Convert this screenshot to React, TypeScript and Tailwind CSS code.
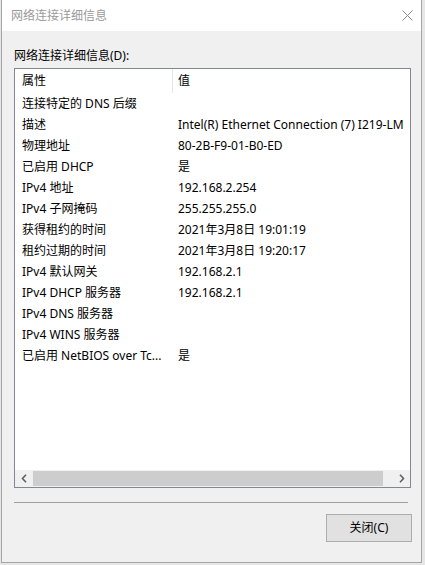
const rows: [string, string][] = [
  ['连接特定的 DNS 后缀', ''],
  ['描述', 'Intel(R) Ethernet Connection (7) I219-LM'],
  ['物理地址', '80-2B-F9-01-B0-ED'],
  ['已启用 DHCP', '是'],
  ['IPv4 地址', '192.168.2.254'],
  ['IPv4 子网掩码', '255.255.255.0'],
  ['获得租约的时间', '2021年3月8日 19:01:19'],
  ['租约过期的时间', '2021年3月8日 19:20:17'],
  ['IPv4 默认网关', '192.168.2.1'],
  ['IPv4 DHCP 服务器', '192.168.2.1'],
  ['IPv4 DNS 服务器', ''],
  ['IPv4 WINS 服务器', ''],
  ['已启用 NetBIOS over Tc...', '是'],
];

function Chevron({ dir }: { dir: 'left' | 'right' }) {
  return (
    <svg width="6" height="9" viewBox="0 0 6 9">
      <path
        d={dir === 'left' ? 'M5 0.8 L1.5 4.5 L5 8.2' : 'M1 0.8 L4.5 4.5 L1 8.2'}
        fill="none"
        stroke="#606060"
        strokeWidth="1.6"
      />
    </svg>
  );
}

export default function App() {
  return (
    <div
      className="w-[425px] h-[565px] bg-[#e6e6e6] overflow-hidden text-[12px] text-black"
      style={{ fontFamily: '"Noto Sans", "Noto Sans CJK SC", sans-serif' }}
    >
      <div className="ml-[1px] w-[421px] h-[563px] flex flex-col border-x border-b border-[#a5a5a5] bg-[#f0f0f0]">
        {/* title bar */}
        <div className="h-[31px] bg-white flex items-center justify-between pl-[9px] pr-[8px] shrink-0">
          <span className="text-[#9a9a9a] leading-none">网络连接详细信息</span>
          <svg width="11" height="11" viewBox="0 0 11 11">
            <path d="M0.5 0.5 L10.5 10.5 M10.5 0.5 L0.5 10.5" stroke="#8a8a8a" strokeWidth="1" />
          </svg>
        </div>

        <div className="flex-1 flex flex-col pl-[12px] pr-[10px] pt-[16px]">
          <div className="leading-[17px] mb-[4px]">网络连接详细信息(D):</div>

          <div className="h-[420px] border border-[#828790] bg-white flex flex-col">
            <div className="flex-1 overflow-hidden">
              <div className="flex h-[24px] items-center">
                <div className="w-[157px] pl-[7px] shrink-0">属性</div>
                <div className="w-px h-[24px] bg-[#e5e5e5] shrink-0" />
                <div className="pl-[5px]">值</div>
              </div>
              {rows.map(([k, v]) => (
                <div key={k} className="flex h-[21px] items-center whitespace-nowrap overflow-hidden">
                  <div className="w-[157px] pl-[7px] shrink-0 overflow-hidden">{k}</div>
                  <div className="w-px shrink-0" />
                  <div className="pl-[5px]">{v}</div>
                </div>
              ))}
            </div>
            <div className="h-[17px] bg-[#f0f0f0] flex items-center shrink-0">
              <div className="w-[17px] h-[17px] flex items-center justify-center">
                <Chevron dir="left" />
              </div>
              <div className="flex-1 h-[17px] flex items-center">
                <div className="ml-[1px] w-[350px] h-[15px] bg-[#cdcdcd]" />
              </div>
              <div className="w-[17px] h-[17px] flex items-center justify-center">
                <Chevron dir="right" />
              </div>
            </div>
          </div>

          <div className="mt-[14px] mr-[3px] h-px bg-[#a0a0a0]" />

          <div className="flex justify-end mt-[11px] -mr-[1px]">
            <button className="w-[86px] h-[28px] bg-[#e1e1e1] border border-[#adadad] flex items-center justify-center">
              关闭(C)
            </button>
          </div>
        </div>
      </div>
    </div>
  );
}
